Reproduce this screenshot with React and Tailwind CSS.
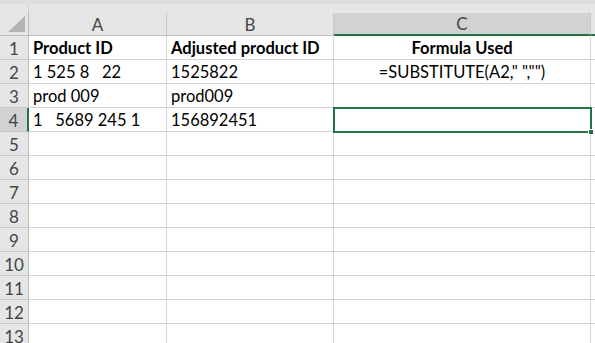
import React from "react";

const cols = [
  { key: "A", w: "w-[138px]" },
  { key: "B", w: "w-[167px]" },
  { key: "C", w: "w-[257px]" },
];

const data = {
  1: ["Product ID", "Adjusted product ID", "Formula Used"],
  2: ["1 525 8   22", "1525822", '=SUBSTITUTE(A2," ","")'],
  3: ["prod 009", "prod009", ""],
  4: ["1   5689 245 1", "156892451", ""],
};

function Row({ n }) {
  const vals = data[n] || ["", "", ""];
  const selected = n === 4;
  return (
    <div className="flex h-[24px]">
      <div
        className={`w-[29px] shrink-0 flex items-center justify-center pt-[2px] text-[17px] text-[#444] border-b border-[#c6c6c6] ${
          selected ? "bg-[#d2d2d2] border-r-2 border-r-[#217346]" : "bg-[#e6e6e6] border-r border-r-[#bdbdbd]"
        }`}
      >
        {n}
      </div>
      {cols.map((c, i) => (
        <div
          key={c.key}
          className={`${c.w} shrink-0 flex items-center pt-[2px] border-r border-b border-[#d4d4d4] px-[4px] text-[16.5px] text-black whitespace-pre overflow-hidden ${
            n === 1 ? "font-bold" : ""
          } ${i === 2 ? "justify-center" : ""}`}
        >
          {vals[i]}
        </div>
      ))}
      <div className="flex-1 border-b border-[#d4d4d4]" />
    </div>
  );
}

export default function App() {
  const rows = Array.from({ length: 13 }, (_, i) => i + 1);
  return (
    <div
      className="w-[595px] h-[343px] overflow-hidden bg-white relative"
      style={{ fontFamily: "Lato, 'Open Sans', sans-serif" }}
    >
      <div className="h-[4px] bg-[#dedede]" />
      <div className="bg-[#e6e6e6]">
        <div className="h-[9px] flex">
          <div className="w-[29px] border-r border-[#cfcfcf]" />
        </div>
        <div className="flex h-[23px]">
          <div className="w-[29px] shrink-0 border-r border-b border-[#bdbdbd] relative flex items-end justify-end pb-[3px] pr-[3px]">
            <svg width="17" height="16" viewBox="0 0 17 16">
              <polygon points="17,0 17,16 0,16" fill="#b4b4b4" />
            </svg>
          </div>
          {cols.map((c) => (
            <div
              key={c.key}
              className={`${c.w} shrink-0 flex items-center justify-center pt-[1px] text-[17px] border-r border-[#c6c6c6] ${
                c.key === "C"
                  ? "bg-[#d2d2d2] border-b-2 border-b-[#217346] text-[#444]"
                  : "border-b border-b-[#bdbdbd] text-[#444]"
              }`}
            >
              {c.key}
            </div>
          ))}
          <div className="flex-1 border-b-2 border-[#217346] bg-[#e6e6e6]" />
        </div>
      </div>
      {rows.map((n) => (
        <Row key={n} n={n} />
      ))}
      <div className="absolute left-[333px] top-[107px] w-[259px] h-[26px] border-2 border-[#217346] pointer-events-none">
        <div className="absolute -right-[4px] -bottom-[4px] w-[6px] h-[6px] bg-[#217346] border border-white" />
      </div>
    </div>
  );
}
